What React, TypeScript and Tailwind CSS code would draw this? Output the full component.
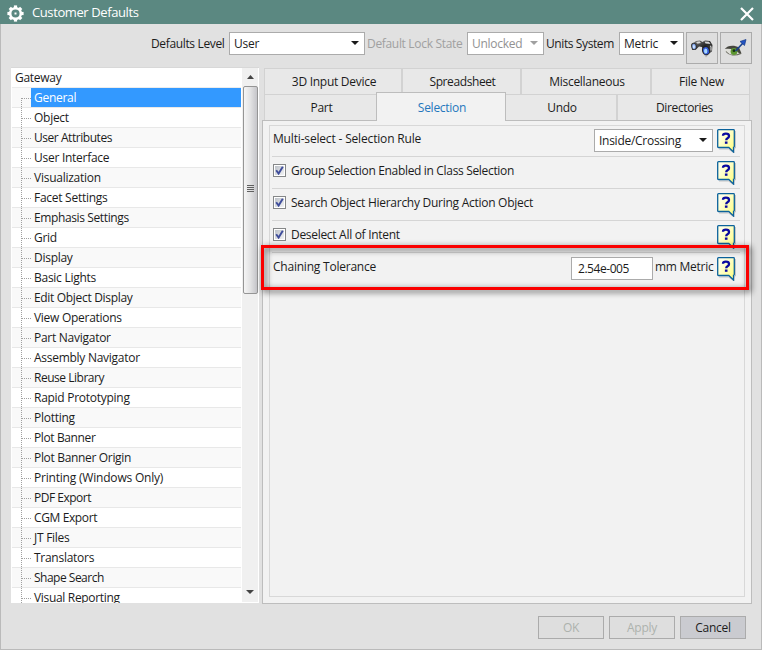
import React, { useState } from 'react';

const TREE_ITEMS = [
    'General', 'Object', 'User Attributes', 'User Interface', 'Visualization', 'Facet Settings',
    'Emphasis Settings', 'Grid', 'Display', 'Basic Lights', 'Edit Object Display', 'View Operations',
    'Part Navigator', 'Assembly Navigator', 'Reuse Library', 'Rapid Prototyping', 'Plotting',
    'Plot Banner', 'Plot Banner Origin', 'Printing (Windows Only)', 'PDF Export', 'CGM Export',
    'JT Files', 'Translators', 'Shape Search', 'Visual Reporting'
];

// Tracking keeps each label at its native dialog width
const TRACKING: Record<string, string> = {
    'User Attributes': 'tracking-[-0.45px]',
    'Visualization': 'tracking-[-0.25px]',
    'Emphasis Settings': 'tracking-[-0.38px]',
    'Edit Object Display': 'tracking-[-0.32px]',
    'View Operations': 'tracking-[-0.28px]',
    'Reuse Library': 'tracking-[-0.48px]',
    'Plot Banner': 'tracking-[-0.38px]',
    'Plot Banner Origin': 'tracking-[-0.33px]',
    'Printing (Windows Only)': 'tracking-[-0.2px]',
    'PDF Export': 'tracking-[-0.5px]',
    'CGM Export': 'tracking-[-0.38px]',
    'Shape Search': 'tracking-[-0.5px]',
    'Visual Reporting': 'tracking-[-0.32px]'
};

const CLS = {
    FIELD: 'h-[23px] border border-[#ababab] bg-white flex items-center justify-between',
    TOOL: 'w-8 h-8 border border-[#ababab] bg-[#dedede] flex items-center justify-center',
    TAB: 'h-full flex items-center justify-center border-[#d2d2d2] bg-[#e8e8e8] pl-[2px]',
    BUTTON: 'w-[66px] h-[23px] border border-[#ababab] flex items-center justify-center pt-px'
};

const Arrow: React.FC<{ color?: string }> = ({ color = '#1a1a1a' }) => (
    <svg width="8" height="4" viewBox="0 0 8 4" className="shrink-0 -mt-[2px]">
        <path d="M0 0h8L4 4z" fill={color} />
    </svg>
);

const GearIcon = () => (
    <svg width="17" height="17" viewBox="0 0 17 17" className="shrink-0 mt-[2px]">
        <circle cx="8.5" cy="8.5" r="5.3" fill="none" stroke="#fff" strokeWidth="2.5" />
        {[0, 45, 90, 135, 180, 225, 270, 315].map(a => (
            <rect key={a} x="6.9" y="0.4" width="3.2" height="2.8" fill="#fff" transform={`rotate(${a} 8.5 8.5)`} />
        ))}
        <rect x="7.5" y="7.5" width="2" height="2" fill="#fff" />
    </svg>
);

const BinocularsIcon = () => (
    <svg width="24" height="20" viewBox="0 0 24 20" className="mt-px">
        <defs>
            <linearGradient id="barrel" x1="0" y1="0" x2="1" y2="1">
                <stop offset="0" stopColor="#8a8a8a" />
                <stop offset="0.5" stopColor="#262626" />
                <stop offset="1" stopColor="#666" />
            </linearGradient>
        </defs>
        <path d="M13 14l8-1-5 5.500z" fill="#999" opacity="0.6" />
        <path d="M1.500 5.500L6 2l4-.5 2.500 1.500L15 1.500l5 .5 2.500 4-.5 6.500-4.500 3-4.500-3-1-4.500-3-.5-3 3-4 .5z" fill="url(#barrel)" />
        <path d="M6 3l3.500-.8 1.500 1.800-3.500.8zM14.500 2.400l4.500.4 1.500 2.200-5-.4z" fill="#d5d5d5" />
        <ellipse cx="4" cy="7.400" rx="2.800" ry="3.700" fill="#333" transform="rotate(-12 4 7.400)" />
        <ellipse cx="4" cy="7.500" rx="1.900" ry="2.700" fill="#7fa2e6" transform="rotate(-12 4 7.500)" />
        <ellipse cx="3.900" cy="7.700" rx="1" ry="1.700" fill="#d3e6ff" />
        <ellipse cx="16" cy="11.500" rx="4" ry="4.700" fill="#222" transform="rotate(-15 16 11.500)" />
        <ellipse cx="16" cy="11.700" rx="3" ry="3.700" fill="#3158d4" transform="rotate(-15 16 11.700)" />
        <ellipse cx="15.700" cy="11.900" rx="1.700" ry="2.500" fill="#a5d7ff" />
        <path d="M20 7l1 .5v4" stroke="#ddd" fill="none" />
    </svg>
);

const EyeArrowIcon = () => (
    <svg width="24" height="20" viewBox="0 0 24 20">
        <path d="M1 12.500c3-4 9-5.500 15-1.500l1.500 5C12 18.500 5 17.500 1 12.500z" fill="#deded8" />
        <path d="M.8 11C3 7.500 10 6.500 15 9.500l2.500 6-1.500.5C12 11.500 6 9.800 .8 11z" fill="#45453f" />
        <path d="M2 13.500c3 4 9 4.500 15 2" stroke="#66665c" strokeWidth="1.100" fill="none" />
        <circle cx="10" cy="13.500" r="3.400" fill="#5c9630" />
        <circle cx="10" cy="12.700" r="1.400" fill="#173012" />
        <path d="M11.500 13L19 5" stroke="#174190" strokeWidth="1.700" />
        <path d="M22 1.500l-1.500 6-4.500-4z" fill="#2354c4" stroke="#173987" strokeWidth=".7" />
    </svg>
);

const HelpIcon = () => (
    <svg width="19" height="24" viewBox="0 0 19 24" className="shrink-0">
        <defs>
            <linearGradient id="note" x1="0" y1="0" x2="1" y2="1">
                <stop offset="0.2" stopColor="#ffffe6" />
                <stop offset="1" stopColor="#ffff78" />
            </linearGradient>
        </defs>
        <path d="M2 20h9.500l5.500 4v-4l1.500-1V2" fill="none" stroke="#999" strokeWidth="1" opacity=".5" />
        <path d="M1.500 .7h15q.8 0 .8 .8v16q0 .8-.8 .8v4.700L11.800 18.500h-10.300q-.8 0-.8-.8V1.500q0-.8 .8-.8z" fill="url(#note)" stroke="#0b629b" strokeWidth="1.300" />
        <path d="M6 6.700q0-2 2.900-2 3.100 0 3.100 2.300 0 1.500-1.500 2.300-1.300.7-1.300 2" fill="none" stroke="#0a0aa0" strokeWidth="2.300" />
        <rect x="7.900" y="12.500" width="2.600" height="2.300" fill="#0a0aa0" />
    </svg>
);

const Checkbox: React.FC<{ checked: boolean; onChange: () => void }> = ({ checked, onChange }) => (
    <button onClick={onChange} className="w-[13px] h-[13px] shrink-0 border border-[#858788] bg-white p-px">
        <span className="block w-full h-full bg-linear-to-br from-[#bcc1c8] to-[#f3f4f5]">
            {checked && (
                <svg width="9" height="9" viewBox="0 0 9 9">
                    <path d="M1.200 4.200L3.600 7.600 7.800 .8" fill="none" stroke="#3f4d9b" strokeWidth="1.900" />
                </svg>
            )}
        </span>
    </button>
);

const TreePanel: React.FC<{ selected: string; onSelect: (item: string) => void }> = ({ selected, onSelect }) => (
    <div className="w-[248px] h-[536px] bg-white border-t border-[#d8d8d8] flex overflow-hidden">
        <div className="w-[230px] shrink-0 pl-px overflow-hidden h-[535px]">
            <div className="h-5 pl-[3px] flex items-center border-b border-[#ececec]">Gateway</div>
            {TREE_ITEMS.map((item, i) => (
                <div key={item} className={`h-5 flex border-b border-[#e8e8e8] ${i % 2 === 0 ? 'bg-[#f9f9f9]' : 'bg-white'}`}>
                    <svg width="19" height="20" className="shrink-0">
                        <path d={i === 0 ? 'M9.500 10v10' : 'M9.500 0v20'} stroke="#a0a0a0" strokeDasharray="1 1" />
                        <path d="M10 10.500h9" stroke="#a0a0a0" strokeDasharray="1 1" />
                    </svg>
                    <button
                        onClick={() => onSelect(item)}
                        className={`h-[19px] flex-1 pl-[3px] text-left leading-[19px] whitespace-nowrap ${TRACKING[item] ?? ''} ${item === selected ? 'bg-[#3399ff] text-white' : ''}`}
                    >
                        {item}
                    </button>
                </div>
            ))}
        </div>
        <div className="ml-px w-4 h-[534px] bg-[#f0f0f0] flex flex-col items-center">
            <div className="h-[18px] flex items-center">
                <svg width="7" height="4" viewBox="0 0 7 4"><path d="M3.500 0L7 4H0z" fill="#444" /></svg>
            </div>
            <div className="w-[15px] h-[208px] border border-[#959595] rounded-[2px] bg-linear-to-r from-[#f5f5f5] via-[#e2e2e3] to-[#c5c5c9] flex flex-col items-center justify-center gap-px pb-[3px]">
                {[0, 1, 2, 3].map(n => <span key={n} className="w-[7px] h-px bg-[#606060]" />)}
            </div>
            <div className="flex-1" />
            <div className="h-[18px] flex items-center"><Arrow color="#444" /></div>
        </div>
    </div>
);

const OptionRow: React.FC<{ children: React.ReactNode; last?: boolean }> = ({ children, last }) => (
    <div className={`h-8 pl-px pr-[4px] flex items-start ${last ? '' : 'border-b border-[#d5d5d5]'}`}>
        {children}
    </div>
);

export const CustomerDefaults: React.FC = () => {
    const [selected, setSelected] = useState('General');
    const [checks, setChecks] = useState([true, true, true]);
    const toggle = (index: number) => setChecks(checks.map((c, i) => (i === index ? !c : c)));

    const checkLabels = [
        { label: 'Group Selection Enabled in Class Selection', tracking: 'tracking-[-0.33px]' },
        { label: 'Search Object Hierarchy During Action Object', tracking: 'tracking-[-0.27px]' },
        { label: 'Deselect All of Intent', tracking: 'tracking-[-0.3px]' }
    ];

    return (
        <div className="w-[762px] h-[650px] overflow-hidden bg-[#e1e1e1] text-[#1c1c1c] font-['Open_Sans','Noto_Sans',sans-serif] text-[12px] leading-4 tracking-[-0.27px] flex flex-col">
            {/* Title bar */}
            <div className="h-6 shrink-0 bg-[#5b8881] pl-[7px] pr-2 flex items-center text-white">
                <GearIcon />
                <span className="ml-2 text-[13px] tracking-[-0.4px] flex-1">Customer Defaults</span>
                <svg width="14" height="14" viewBox="0 0 14 14" className="mt-[3px]">
                    <path d="M1 1l12 12M13 1L1 13" stroke="#fff" strokeWidth="2.200" />
                </svg>
            </div>

            <div className="flex-1 border-x border-b border-[#bababa] pt-2 pl-[10px] pr-[9px]">
                {/* Toolbar */}
                <div className="h-[35px] flex items-start justify-end">
                    <span className="w-[78px] mt-1 whitespace-nowrap tracking-[-0.35px]">Defaults Level</span>
                    <div className={`${CLS.FIELD} w-[136px] pl-1 pr-[5px]`}>User<Arrow /></div>
                    <span className="w-[102px] pl-[2px] mt-1 whitespace-nowrap text-[#a0a0a0] tracking-[-0.32px]">Default Lock State</span>
                    <div className={`${CLS.FIELD} w-[77px] pl-1 pr-[5px] text-[#929292]`}>Unlocked<Arrow color="#a0a0a0" /></div>
                    <span className="w-[75px] pl-[2px] mt-1 whitespace-nowrap tracking-[-0.4px]">Units System</span>
                    <div className={`${CLS.FIELD} w-[65px] pl-1 pr-[5px]`}>Metric<Arrow /></div>
                    <button className={`${CLS.TOOL} ml-[2px]`}><BinocularsIcon /></button>
                    <button className={`${CLS.TOOL} ml-[2px]`}><EyeArrowIcon /></button>
                </div>

                <div className="flex">
                    <TreePanel selected={selected} onSelect={setSelected} />

                    <div className="ml-[3px] mt-px w-[490px]">
                        {/* Tabs */}
                        <div className="mx-[2px] h-[26px] flex border border-b-0 border-[#d2d2d2]">
                            <div className={`${CLS.TAB} w-[138px] border-r-2`}>3D Input Device</div>
                            <div className={`${CLS.TAB} w-[119px] border-r-2 tracking-[-0.4px]`}>Spreadsheet</div>
                            <div className={`${CLS.TAB} w-[130px] border-r-2`}>Miscellaneous</div>
                            <div className={`${CLS.TAB} flex-1`}>File New</div>
                        </div>
                        <div className="mx-[2px] h-[26px] flex border border-b-0 border-[#d2d2d2]">
                            <div className={`${CLS.TAB} w-[111px]`}>Part</div>
                            <div className="relative z-10 w-[130px] h-[29px] -mt-[3px] shrink-0 bg-[#f2f2f2] border border-b-0 border-[#bdbdbd] text-[#2577bd] flex items-center justify-center pl-[2px] pt-px">Selection</div>
                            <div className={`${CLS.TAB} w-[112px] border-r-2`}>Undo</div>
                            <div className={`${CLS.TAB} flex-1 tracking-[-0.37px]`}>Directories</div>
                        </div>

                        <div className="h-[484px] bg-[#f2f2f2] border border-[#bdbdbd] p-[4px] pl-[6px] pr-[6px] pb-[6px]">
                            <div className="relative h-full border border-[#d8d8d8] pl-[2px] pr-[4px]">
                                <div className="-mt-px">
                                    <OptionRow>
                                        <span className="mt-[6px] flex-1 tracking-[-0.17px]">Multi-select - Selection Rule</span>
                                        <div className={`${CLS.FIELD} w-[119px] mt-1 pl-1 pr-[5px]`}>Inside/Crossing<Arrow /></div>
                                        <span className="ml-1 mt-1"><HelpIcon /></span>
                                    </OptionRow>
                                    {checkLabels.map(({ label, tracking }, i) => (
                                        <OptionRow key={label}>
                                            <span className="mt-[7px] flex"><Checkbox checked={checks[i]} onChange={() => toggle(i)} /></span>
                                            <span className={`ml-[5px] mt-[6px] flex-1 ${tracking}`}>{label}</span>
                                            <span className="ml-1 mt-1"><HelpIcon /></span>
                                        </OptionRow>
                                    ))}
                                    <OptionRow last>
                                        <span className="mt-[6px] flex-1 tracking-[-0.22px]">Chaining Tolerance</span>
                                        <div className={`${CLS.FIELD} w-[82px] mt-1 pl-[6px] tracking-[-0.45px]`}>2.54e-005</div>
                                        <span className="w-[58px] ml-[2px] mt-[6px] whitespace-nowrap">mm Metric</span>
                                        <span className="ml-1 mt-1"><HelpIcon /></span>
                                    </OptionRow>
                                </div>
                                {/* Highlight frame over the tolerance row */}
                                <div className="absolute -left-[9px] top-[119px] w-[488px] h-[45px] border-[3px] border-[#fa0000] drop-shadow-[2px_2px_3px_rgba(0,0,0,0.7)] pointer-events-none" />
                            </div>
                        </div>
                    </div>
                </div>

                {/* Footer buttons */}
                <div className="mt-[12px] pr-[6px] flex justify-end gap-[5px]">
                    <button className={`${CLS.BUTTON} bg-[#dedede] text-[#adb2ad]`}>OK</button>
                    <button className={`${CLS.BUTTON} bg-[#dedede] text-[#adb2ad]`}>Apply</button>
                    <button className={`${CLS.BUTTON} bg-[#cacbd0]`}>Cancel</button>
                </div>
            </div>
        </div>
    );
};

export default function App() {
    return <CustomerDefaults />;
}
